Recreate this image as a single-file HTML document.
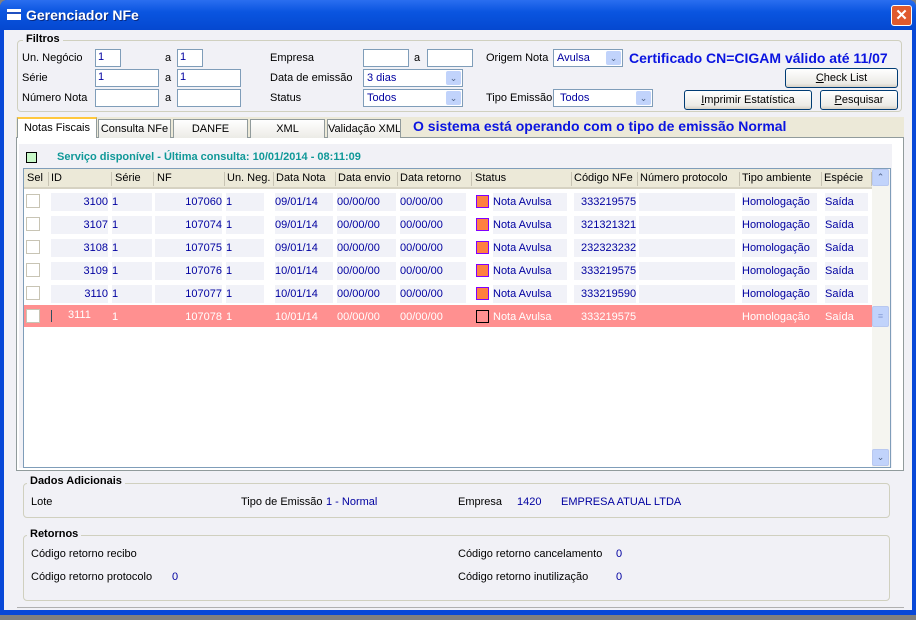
<!DOCTYPE html>
<html><head><meta charset="utf-8"><style>
*{margin:0;padding:0;box-sizing:border-box}
body{width:916px;height:620px;position:relative;overflow:hidden;background:#808080;font-family:"Liberation Sans",Arial,sans-serif;font-size:11px;color:#000}
.a{position:absolute;white-space:nowrap}
.win{left:0;top:0;width:916px;height:615px;background:#0848d8;border-radius:7px 7px 0 0}
.title{left:0;top:0;width:916px;height:30px;background:linear-gradient(#2a6ef0,#0a55e0 40%,#0548d0);border-radius:7px 7px 0 0}
.body{left:4px;top:30px;width:908px;height:580px;background:#f1f1f6}
.lbl{font-size:11px;white-space:nowrap}
.inp{background:#fff;border:1px solid #7f9db9;height:18px;padding:1px 2px;color:#0000a0;font-size:11px}
.sel{background:#fff;border:1px solid #7f9db9;height:18px;padding:2px 3px;color:#0000a0;font-size:11px}
.sel i{position:absolute;right:1px;top:1px;width:15px;height:14px;background:#c1d3fb;border-radius:2px;font-style:normal;color:#4d6185;font-size:9px;text-align:center;line-height:14px}
.btn{background:linear-gradient(#fff,#ecebe6 80%,#d6d0c5);border:1px solid #003c74;border-radius:3px;text-align:center;line-height:18px;font-size:11px}
.grp{border:1px solid #d0d0bf;border-radius:4px}
.gt{background:#f1f1f6;font-weight:bold;padding:0 3px}
.tab{background:linear-gradient(#fff,#ecebe6);border:1px solid #919b9c;border-bottom:none;height:19px;text-align:center;line-height:18px;font-size:11px;white-space:nowrap;overflow:hidden}
.hdr{left:24px;top:169px;width:848px;height:20px;background:#ece9d8;border-bottom:2px solid #d6d2c2}
.hc{position:absolute;top:3px;font-size:11px;white-space:nowrap}
.hs{position:absolute;top:3px;width:1px;height:14px;background:#c8c4b4}
.row{position:absolute;left:24px;width:848px;height:23px;color:#0000a0}
.row div{position:absolute;top:3px;height:18px;background:#f1f2f8;line-height:18px;white-space:nowrap;overflow:hidden}
.r{text-align:right}
.cb{position:absolute;left:2px;top:4px;width:14px;height:14px;background:#fff;border:1px solid #c8c4b4}
.st{width:13px!important;height:13px!important;top:5px!important;background:#ff8040!important;border:1px solid #8000ff}
.sel6{background:#ff9090}
.sel6 div{background:transparent!important;color:#fff}
.bl{color:#0000a0}
</style></head><body>
<div class="a win"></div>
<div class="a title"></div>
<div class="a" style="left:7px;top:9px;width:14px;height:11px;background:#fff;border-top:3px solid #fff;box-shadow:inset 0 2px 0 #2050c0"></div>
<div class="a" style="left:26px;top:7px;color:#fff;font-weight:bold;font-size:14px;text-shadow:1px 1px #0a2a80">Gerenciador NFe</div>
<div class="a" style="left:891px;top:5px;width:21px;height:21px;background:#e05a2e;border:1px solid #fff;border-radius:3px;color:#fff;font-weight:bold;font-size:15px;text-align:center;line-height:19px">✕</div>
<div class="a body"></div>

<div class="a grp" style="left:17px;top:40px;width:885px;height:72px"></div>
<div class="a gt" style="left:23px;top:33px">Filtros</div>
<div class="a lbl" style="left:22px;top:52px">Un. Negócio</div>
<div class="a lbl" style="left:22px;top:72px">Série</div>
<div class="a lbl" style="left:22px;top:92px">Número Nota</div>
<div class="a inp" style="left:95px;top:49px;width:26px">1</div>
<div class="a inp" style="left:95px;top:69px;width:64px">1</div>
<div class="a inp" style="left:95px;top:89px;width:64px"></div>
<div class="a lbl" style="left:165px;top:52px">a</div>
<div class="a lbl" style="left:165px;top:72px">a</div>
<div class="a lbl" style="left:165px;top:92px">a</div>
<div class="a inp" style="left:177px;top:49px;width:26px">1</div>
<div class="a inp" style="left:177px;top:69px;width:64px">1</div>
<div class="a inp" style="left:177px;top:89px;width:64px"></div>
<div class="a lbl" style="left:270px;top:52px">Empresa</div>
<div class="a lbl" style="left:270px;top:72px">Data de emissão</div>
<div class="a lbl" style="left:270px;top:92px">Status</div>
<div class="a inp" style="left:363px;top:49px;width:46px"></div>
<div class="a lbl" style="left:414px;top:52px">a</div>
<div class="a inp" style="left:427px;top:49px;width:46px"></div>
<div class="a sel" style="left:363px;top:69px;width:100px">3 dias<i>⌄</i></div>
<div class="a sel" style="left:363px;top:89px;width:100px">Todos<i>⌄</i></div>
<div class="a lbl" style="left:486px;top:52px">Origem Nota</div>
<div class="a lbl" style="left:486px;top:92px">Tipo Emissão</div>
<div class="a sel" style="left:553px;top:49px;width:70px">Avulsa<i>⌄</i></div>
<div class="a sel" style="left:553px;top:89px;width:100px">&nbsp;Todos<i>⌄</i></div>
<div class="a" style="left:629px;top:50px;color:#0a14e0;font-weight:bold;font-size:14px;white-space:nowrap">Certificado CN=CIGAM válido até 11/07</div>
<div class="a btn" style="left:785px;top:68px;width:113px;height:20px"><u>C</u>heck List</div>
<div class="a btn" style="left:684px;top:90px;width:128px;height:20px"><u>I</u>mprimir Estatística</div>
<div class="a btn" style="left:820px;top:90px;width:78px;height:20px"><u>P</u>esquisar</div>

<div class="a" style="left:16px;top:117px;width:888px;height:20px;background:#ece9d8"></div>
<div class="a" style="left:16px;top:137px;width:888px;height:334px;background:#fff;border:1px solid #919b9c"></div>
<div class="a tab" style="left:17px;top:117px;width:80px;height:21px;background:#fff;border-top:2px solid #ffc83c">Notas Fiscais</div>
<div class="a tab" style="left:98px;top:119px;width:73px">Consulta NFe</div>
<div class="a tab" style="left:173px;top:119px;width:75px">DANFE</div>
<div class="a tab" style="left:250px;top:119px;width:75px">XML</div>
<div class="a tab" style="left:327px;top:119px;width:74px">Validação XML</div>
<div class="a" style="left:413px;top:118px;color:#0a14e0;font-weight:bold;font-size:14px;white-space:nowrap">O sistema está operando com o tipo de emissão Normal</div>
<div class="a" style="left:19px;top:144px;width:873px;height:324px;background:#f1f1f6"></div>
<div class="a" style="left:26px;top:152px;width:11px;height:11px;background:#c8f8c8;border:1px solid #000"></div>
<div class="a" style="left:57px;top:151px;color:#109898;font-weight:bold;font-size:11px">Serviço disponível - Última consulta: 10/01/2014 - 08:11:09</div>

<div class="a" style="left:23px;top:168px;width:868px;height:300px;background:#fff;border:1px solid #7f9db9"></div>
<div class="a hdr">
<span class="hc" style="left:3px">Sel</span><span class="hs" style="left:24px"></span>
<span class="hc" style="left:27px">ID</span><span class="hs" style="left:87px"></span>
<span class="hc" style="left:91px">Série</span><span class="hs" style="left:129px"></span>
<span class="hc" style="left:133px">NF</span><span class="hs" style="left:200px"></span>
<span class="hc" style="left:203px">Un. Neg.</span><span class="hs" style="left:249px"></span>
<span class="hc" style="left:252px">Data Nota</span><span class="hs" style="left:311px"></span>
<span class="hc" style="left:314px">Data envio</span><span class="hs" style="left:373px"></span>
<span class="hc" style="left:376px">Data retorno</span><span class="hs" style="left:447px"></span>
<span class="hc" style="left:451px">Status</span><span class="hs" style="left:547px"></span>
<span class="hc" style="left:550px">Código NFe</span><span class="hs" style="left:613px"></span>
<span class="hc" style="left:616px">Número protocolo</span><span class="hs" style="left:715px"></span>
<span class="hc" style="left:718px">Tipo ambiente</span><span class="hs" style="left:797px"></span>
<span class="hc" style="left:800px">Espécie</span><span class="hs" style="left:847px"></span>
</div>
<div class="a" style="left:872px;top:169px;width:18px;height:298px;background:#f5f5f0"></div>
<div class="a" style="left:872px;top:169px;width:17px;height:17px;background:#c1d3fb;border:1px solid #b8c8f0;border-radius:2px;color:#4d6185;font-size:9px;text-align:center;line-height:15px">⌃</div>
<div class="a" style="left:872px;top:306px;width:17px;height:21px;background:#c1d3fb;border:1px solid #b8c8f0;border-radius:2px;color:#8aa0d8;font-size:9px;text-align:center;line-height:19px">≡</div>
<div class="a" style="left:872px;top:449px;width:17px;height:17px;background:#c1d3fb;border:1px solid #b8c8f0;border-radius:2px;color:#4d6185;font-size:9px;text-align:center;line-height:15px">⌄</div>

<div class="row" style="top:190px"><span class="cb"></span><div class="r" style="left:27px;width:57px">3100</div><div style="left:88px;width:40px">1</div><div class="r" style="left:131px;width:67px">107060</div><div style="left:202px;width:38px">1</div><div style="left:251px;width:58px">09/01/14</div><div style="left:313px;width:59px">00/00/00</div><div style="left:376px;width:66px">00/00/00</div><div class="st" style="left:452px"></div><div style="left:469px;width:74px">Nota Avulsa</div><div style="left:550px;width:62px;padding-left:7px">333219575</div><div style="left:615px;width:96px"></div><div style="left:718px;width:75px">Homologação</div><div style="left:801px;width:43px">Saída</div></div>
<div class="row" style="top:213px"><span class="cb"></span><div class="r" style="left:27px;width:57px">3107</div><div style="left:88px;width:40px">1</div><div class="r" style="left:131px;width:67px">107074</div><div style="left:202px;width:38px">1</div><div style="left:251px;width:58px">09/01/14</div><div style="left:313px;width:59px">00/00/00</div><div style="left:376px;width:66px">00/00/00</div><div class="st" style="left:452px"></div><div style="left:469px;width:74px">Nota Avulsa</div><div style="left:550px;width:62px;padding-left:7px">321321321</div><div style="left:615px;width:96px"></div><div style="left:718px;width:75px">Homologação</div><div style="left:801px;width:43px">Saída</div></div>
<div class="row" style="top:236px"><span class="cb"></span><div class="r" style="left:27px;width:57px">3108</div><div style="left:88px;width:40px">1</div><div class="r" style="left:131px;width:67px">107075</div><div style="left:202px;width:38px">1</div><div style="left:251px;width:58px">09/01/14</div><div style="left:313px;width:59px">00/00/00</div><div style="left:376px;width:66px">00/00/00</div><div class="st" style="left:452px"></div><div style="left:469px;width:74px">Nota Avulsa</div><div style="left:550px;width:62px;padding-left:7px">232323232</div><div style="left:615px;width:96px"></div><div style="left:718px;width:75px">Homologação</div><div style="left:801px;width:43px">Saída</div></div>
<div class="row" style="top:259px"><span class="cb"></span><div class="r" style="left:27px;width:57px">3109</div><div style="left:88px;width:40px">1</div><div class="r" style="left:131px;width:67px">107076</div><div style="left:202px;width:38px">1</div><div style="left:251px;width:58px">10/01/14</div><div style="left:313px;width:59px">00/00/00</div><div style="left:376px;width:66px">00/00/00</div><div class="st" style="left:452px"></div><div style="left:469px;width:74px">Nota Avulsa</div><div style="left:550px;width:62px;padding-left:7px">333219575</div><div style="left:615px;width:96px"></div><div style="left:718px;width:75px">Homologação</div><div style="left:801px;width:43px">Saída</div></div>
<div class="row" style="top:282px"><span class="cb"></span><div class="r" style="left:27px;width:57px">3110</div><div style="left:88px;width:40px">1</div><div class="r" style="left:131px;width:67px">107077</div><div style="left:202px;width:38px">1</div><div style="left:251px;width:58px">10/01/14</div><div style="left:313px;width:59px">00/00/00</div><div style="left:376px;width:66px">00/00/00</div><div class="st" style="left:452px"></div><div style="left:469px;width:74px">Nota Avulsa</div><div style="left:550px;width:62px;padding-left:7px">333219590</div><div style="left:615px;width:96px"></div><div style="left:718px;width:75px">Homologação</div><div style="left:801px;width:43px">Saída</div></div>
<div class="row sel6" style="top:305px;height:22px"><span class="cb"></span><span style="position:absolute;left:27px;top:5px;width:1px;height:12px;background:#305060"></span><div style="left:44px;width:40px;top:1px!important">3111</div><div style="left:88px;width:40px">1</div><div class="r" style="left:131px;width:67px">107078</div><div style="left:202px;width:38px">1</div><div style="left:251px;width:58px">10/01/14</div><div style="left:313px;width:59px">00/00/00</div><div style="left:376px;width:66px">00/00/00</div><div style="left:452px;width:13px;height:13px;top:5px;border:1px solid #000"></div><div style="left:469px;width:74px">Nota Avulsa</div><div style="left:550px;width:62px;padding-left:7px">333219575</div><div style="left:718px;width:75px">Homologação</div><div style="left:801px;width:43px">Saída</div></div>

<div class="a grp" style="left:23px;top:483px;width:867px;height:35px"></div>
<div class="a gt" style="left:27px;top:475px">Dados Adicionais</div>
<div class="a lbl" style="left:31px;top:496px">Lote</div>
<div class="a lbl" style="left:241px;top:496px">Tipo de Emissão</div>
<div class="a lbl bl" style="left:326px;top:496px">1 - Normal</div>
<div class="a lbl" style="left:458px;top:496px">Empresa</div>
<div class="a lbl bl" style="left:517px;top:496px">1420</div>
<div class="a lbl bl" style="left:561px;top:496px">EMPRESA ATUAL LTDA</div>

<div class="a grp" style="left:23px;top:535px;width:867px;height:66px"></div>
<div class="a gt" style="left:27px;top:528px">Retornos</div>
<div class="a lbl" style="left:31px;top:548px">Código retorno recibo</div>
<div class="a lbl" style="left:31px;top:571px">Código retorno protocolo</div>
<div class="a lbl bl" style="left:172px;top:571px">0</div>
<div class="a lbl" style="left:458px;top:548px">Código retorno cancelamento</div>
<div class="a lbl bl" style="left:616px;top:548px">0</div>
<div class="a lbl" style="left:458px;top:571px">Código retorno inutilização</div>
<div class="a lbl bl" style="left:616px;top:571px">0</div>
<div class="a" style="left:17px;top:607px;width:887px;height:1px;background:#b0b0b0"></div>
</body></html>
